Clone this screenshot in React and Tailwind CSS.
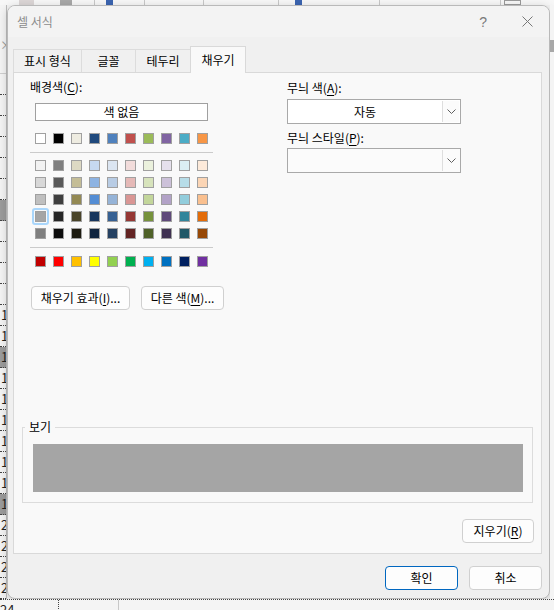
import React from "react";

const F = "font-['Noto_Sans_CJK_KR','Noto_Sans',sans-serif]";

const theme = ["#ffffff", "#000000", "#eeece1", "#1f497d", "#4f81bd", "#c0504d", "#9bbb59", "#8064a2", "#4bacc6", "#f79646"];
const shades = [
  ["#f2f2f2", "#7f7f7f", "#ddd9c3", "#c6d9f0", "#dbe5f1", "#f2dcdb", "#ebf1dd", "#e5e0ec", "#dbeef3", "#fdeada"],
  ["#d8d8d8", "#595959", "#c4bd97", "#8db3e2", "#b8cce4", "#e5b9b7", "#d7e3bc", "#ccc1d9", "#b7dde8", "#fbd5b5"],
  ["#bfbfbf", "#3f3f3f", "#938953", "#548dd4", "#95b3d7", "#d99694", "#c3d69b", "#b2a2c7", "#92cddc", "#fac08f"],
  ["#a5a5a5", "#262626", "#494429", "#17365d", "#366092", "#953734", "#76923c", "#5f497a", "#31859b", "#e36c09"],
  ["#7f7f7f", "#0c0c0c", "#1d1b10", "#0f243e", "#244061", "#632423", "#4f6128", "#3f3151", "#205867", "#974806"],
];
const standard = ["#c00000", "#ff0000", "#ffc000", "#ffff00", "#92d050", "#00b050", "#00b0f0", "#0070c0", "#002060", "#7030a0"];

function Swatches({ colors, sel }) {
  return (
    <div className="flex gap-[7px] ml-[5px]">
      {colors.map((c, i) => (
        <div
          key={i}
          className="relative shrink-0 w-[11px] h-[11px] border border-[#a0a0a0]"
          style={{ backgroundColor: c }}
        >
          {sel === i && (
            <span className="absolute -inset-[4px] rounded-[3px] border-2 border-[#a9d6fb]" />
          )}
        </div>
      ))}
    </div>
  );
}

function Chevron() {
  return (
    <svg width="9" height="5" viewBox="0 0 9 5">
      <path d="M0.5 0.5 L4.5 4.5 L8.5 0.5" fill="none" stroke="#5f5f5f" strokeWidth="1" />
    </svg>
  );
}

function Combo({ value, bgClass }) {
  return (
    <div className={`flex w-[174px] h-[25px] border border-[#a9a9a9] ${bgClass}`}>
      <div className="flex-1 flex items-center justify-center text-[12px] leading-[16px] text-black">
        {value}
      </div>
      <div className="w-[17px] my-[1px] mr-[1px] border-l border-[#dedede] bg-[#fbfbfb] flex items-center justify-center">
        <Chevron />
      </div>
    </div>
  );
}

function Btn({ children, className }) {
  return (
    <button
      className={`shrink-0 h-[24px] rounded-[4px] border bg-[#fdfdfd] text-[12px] leading-[16px] text-black flex items-center justify-center whitespace-nowrap ${className}`}
    >
      {children}
    </button>
  );
}

export default function App() {
  const rows = Array.from({ length: 25 }, (_, i) => i);
  return (
    <div className={`w-[554px] h-[610px] overflow-hidden bg-[#f3f3f3] flex flex-col ${F}`}>
      {/* top strip of background app */}
      <div className="h-[5px] flex bg-[#f7f7f7] shrink-0">
        <div className="w-[95px] border-r border-[#c8c8c8] flex">
          <div className="ml-[19px] w-[15px] bg-[#dcd6d6]" />
          <div className="ml-[26px] w-[12px] bg-[#a8a8a8]" />
        </div>
        <div className="w-[50px] border-r border-[#c8c8c8] flex">
          <div className="ml-[11px] w-[7px] bg-[#3b64b0]" />
        </div>
        <div className="w-[59px] border-r border-[#c8c8c8]" />
        <div className="w-[75px] border-r border-[#c8c8c8]" />
        <div className="w-[101px] border-r border-[#c8c8c8] flex">
          <div className="ml-[16px] w-[7px] bg-[#3b64b0]" />
        </div>
        <div className="w-[121px] border-r border-[#c8c8c8]" />
        <div className="flex-1 flex">
          <div className="ml-[3px] w-[17px] border border-[#9a9a9a]" />
        </div>
      </div>

      <div className="flex h-[594px] shrink-0">
        {/* left strip: row headers */}
        <div className="w-[7px] shrink-0 bg-[#f4f4f4] border-r border-[#bdbdbd] flex flex-col overflow-hidden">
          <div className="h-[50px] flex items-end justify-start pb-[2px]">
            <span className="text-[12px] leading-[12px] text-[#9a9a9a]">×</span>
          </div>
          <div className="h-[21px] border-b border-[#cfcfcf] shrink-0" />
          {rows.map((i) => (
            <div
              key={i}
              className={`h-[21px] shrink-0 border-b border-dotted border-[#444] flex items-center pl-[1px] text-[13px] leading-[14px] text-[#222] ${
                i === 6 || i === 13 || i === 20 ? "bg-[#9b9b9b]" : ""
              }`}
            >
              {i >= 11 && i <= 20 ? "1" : i > 20 ? "2" : ""}
            </div>
          ))}
        </div>

        {/* dialog */}
        <div className="w-[543px] h-[594px] shrink-0 rounded-[8px] border border-[#b9b9b9] bg-[#f0f0f0] flex flex-col overflow-hidden shadow-[0_2px_10px_rgba(0,0,0,0.18)]">
          {/* title bar */}
          <div className="h-[31px] shrink-0 bg-[#f3f3f3] flex items-center pl-[9px] pr-[16px]">
            <span className="text-[12px] leading-[16px] text-[#8c8c8c]">셀 서식</span>
            <span className="ml-auto text-[14px] leading-[16px] text-[#7a7a7a] font-['Liberation_Sans',sans-serif]">?</span>
            <svg className="ml-[35px]" width="11" height="11" viewBox="0 0 11 11">
              <path d="M0.5 0.5 L10.5 10.5 M10.5 0.5 L0.5 10.5" stroke="#777" strokeWidth="1" fill="none" />
            </svg>
          </div>

          {/* tabs */}
          <div className="mt-[9px] ml-[5px] h-[26px] flex items-end shrink-0">
            <div className="w-[69px] h-[23px] border-t border-x border-[#dcdcdc] flex items-center justify-center text-[12px] leading-[16px] text-black">
              표시 형식
            </div>
            <div className="w-[54px] h-[23px] border-t border-r border-[#dcdcdc] flex items-center justify-center text-[12px] leading-[16px] text-black">
              글꼴
            </div>
            <div className="w-[54px] h-[23px] border-t border-[#dcdcdc] flex items-center justify-center text-[12px] leading-[16px] text-black">
              테두리
            </div>
            <div className="relative z-10 w-[56px] h-[27px] -mb-px bg-[#f9f9f9] border-t border-x border-[#d9d9d9] flex items-center justify-center pb-[1px] text-[12px] leading-[16px] text-black">
              채우기
            </div>
          </div>

          {/* panel */}
          <div className="ml-[5px] w-[529px] h-[482px] shrink-0 border border-[#d9d9d9] bg-[#f9f9f9] flex flex-col">
            <div className="flex">
              {/* left column */}
              <div className="ml-[16px] w-[183px] shrink-0 pt-[6px] flex flex-col">
                <div className="text-[12px] leading-[16px] text-black">
                  배경색(<u className="underline-offset-2">C</u>):
                </div>
                <div className="mt-[8px] ml-[5px] w-[173px] h-[18px] border border-[#a0a0a0] bg-white flex items-center justify-center text-[12px] leading-[16px] text-black">
                  색 없음
                </div>
                <div className="mt-[12px]">
                  <Swatches colors={theme} />
                </div>
                <div className="mt-[8px] h-px bg-[#cbcbcb]" />
                <div className="mt-[7px] flex flex-col gap-[6px]">
                  {shades.map((r, i) => (
                    <Swatches key={i} colors={r} sel={i === 3 ? 0 : -1} />
                  ))}
                </div>
                <div className="mt-[8px] h-px bg-[#cbcbcb]" />
                <div className="mt-[8px]">
                  <Swatches colors={standard} />
                </div>
                <div className="mt-[19px] flex gap-[11px] ml-px">
                  <Btn className="w-[99px] border-[#d0d0d0]">
                    채우기 효과(<u className="underline-offset-2">I</u>)...
                  </Btn>
                  <Btn className="w-[83px] border-[#d0d0d0]">
                    다른 색(<u className="underline-offset-2">M</u>)...
                  </Btn>
                </div>
              </div>

              {/* right column */}
              <div className="ml-[74px] pt-[7px] flex flex-col">
                <div className="text-[12px] leading-[16px] text-black">
                  무늬 색(<u className="underline-offset-2">A</u>):
                </div>
                <div className="mt-[3px]">
                  <Combo value="자동" bgClass="bg-white" />
                </div>
                <div className="mt-[6px] text-[12px] leading-[16px] text-black">
                  무늬 스타일(<u className="underline-offset-2">P</u>):
                </div>
                <div className="mt-[2px]">
                  <Combo value="" bgClass="bg-[#fbfbfb]" />
                </div>
              </div>
            </div>

            {/* preview */}
            <div className="relative mt-[117px] ml-[8px] w-[511px] h-[76px] border border-[#dcdcdc] pt-[16px] pl-[10px] pr-[9px]">
              <span className="absolute left-[2px] -top-[9px] px-[4px] bg-[#f9f9f9] text-[12px] leading-[16px] text-black">
                보기
              </span>
              <div className="h-[48px] bg-[#a5a5a5]" />
            </div>

            <div className="mt-[16px] mr-[7px] self-end">
              <Btn className="w-[72px] border-[#d0d0d0]">
                지우기(<u className="underline-offset-2">R</u>)
              </Btn>
            </div>
          </div>

          {/* bottom buttons */}
          <div className="mt-[12px] mr-[7px] flex justify-end gap-[11px]">
            <Btn className="w-[73px] border-[#0067c0]">확인</Btn>
            <Btn className="w-[73px] border-[#d0d0d0]">취소</Btn>
          </div>
        </div>

        {/* right strip */}
        <div className="flex-1 bg-[#f4f4f4] flex flex-col">
          <div className="mt-[35px] h-[12px] bg-[#a8a8a8]" />
        </div>
      </div>

      {/* bottom strip */}
      <div className="flex-1 border-t border-dotted border-[#444] bg-[#f4f4f4] flex">
        <div className="w-[59px] border-r border-dotted border-[#444] text-[13px] leading-[14px] pt-[3px] text-[#222]">
          24
        </div>
        <div className="w-[60px] border-r border-[#c8c8c8]" />
      </div>
    </div>
  );
}
